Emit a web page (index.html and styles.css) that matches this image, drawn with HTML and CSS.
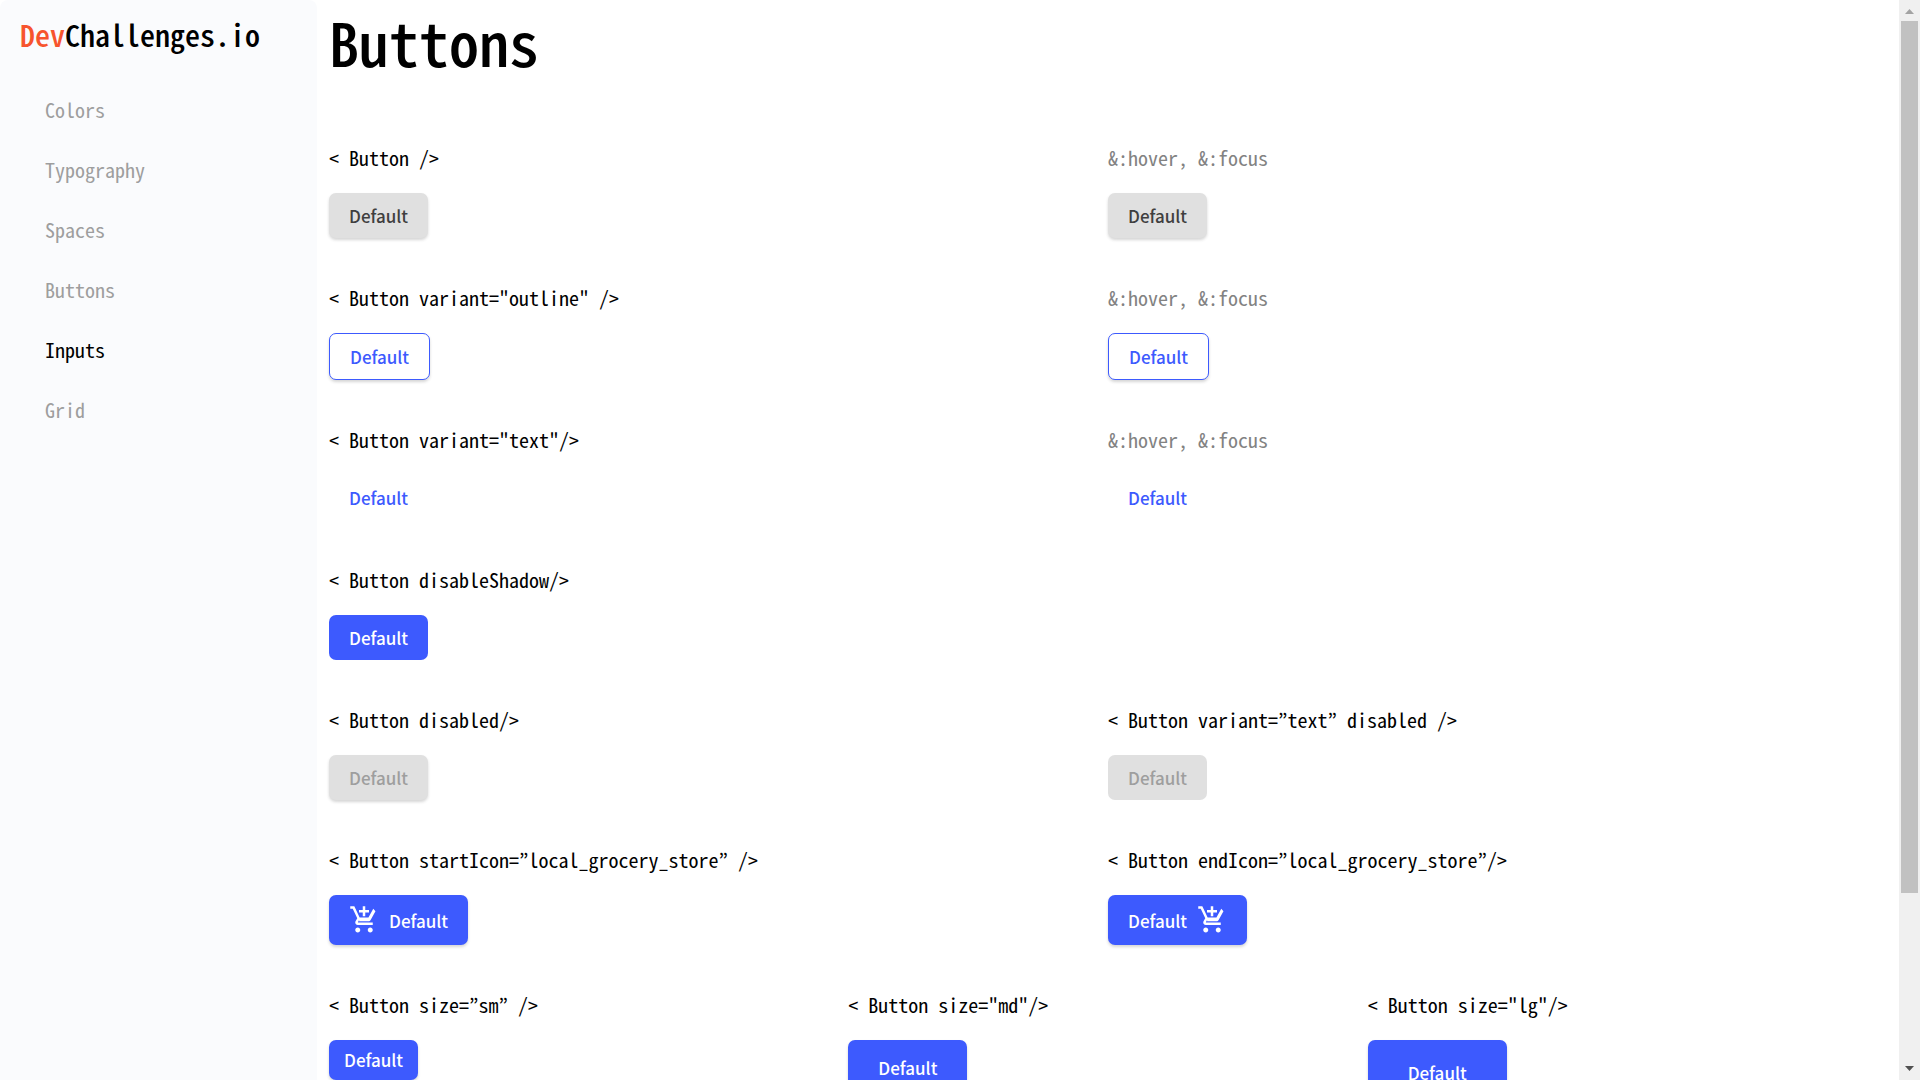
FILE: index.html
```html
<!DOCTYPE html>
<html lang="en">
<head>
<meta charset="utf-8">
<title>DevChallenges.io - Buttons</title>
<link rel="stylesheet" href="styles.css">
</head>
<body>
<svg class="sprite" aria-hidden="true">
  <symbol id="cart" viewBox="0 0 24 24">
    <path d="M11 9h2V6h3V4h-3V1h-2v3H8v2h3v3zm-4 9c-1.1 0-1.99.9-1.99 2S5.900 22 7 22s2-.9 2-2-.9-2-2-2zm10 0c-1.100 0-1.990.9-1.990 2s.89 2 1.990 2 2-.9 2-2-.9-2-2-2zm-8.900-5h7.450c.75 0 1.410-.41 1.750-1.030l3.860-7.010L19.420 3h-.01l-1.100 2-2.760 5H8.530l-.13-.27L6.160 5l-.95-2-.94-2H1v2h2l3.600 7.590-1.350 2.450c-.16.28-.25.61-.25.96 0 1.100.9 2 2 2h12v-2H7.420c-.13 0-.25-.11-.25-.25l.03-.12.900-1.630z"/>
  </symbol>
</svg>
<div class="shell">
  <aside class="sidebar">
    <a class="logo" href="#"><span class="logo-accent">Dev</span>Challenges.io</a>
    <nav class="nav">
      <a href="#colors">Colors</a>
      <a href="#typography">Typography</a>
      <a href="#spaces">Spaces</a>
      <a href="#buttons">Buttons</a>
      <a class="active" href="#inputs">Inputs</a>
      <a href="#grid">Grid</a>
    </nav>
  </aside>
  <main class="content">
    <h1 class="title">Buttons</h1>
    <section class="row">
      <div class="cell"><p class="code">&lt; Button /&gt;</p><button class="btn">Default</button></div>
      <div class="cell"><p class="code muted">&amp;:hover, &amp;:focus</p><button class="btn">Default</button></div>
    </section>
    <section class="row">
      <div class="cell"><p class="code">&lt; Button variant="outline" /&gt;</p><button class="btn outline">Default</button></div>
      <div class="cell"><p class="code muted">&amp;:hover, &amp;:focus</p><button class="btn outline">Default</button></div>
    </section>
    <section class="row">
      <div class="cell"><p class="code">&lt; Button variant="text"/&gt;</p><button class="btn text">Default</button></div>
      <div class="cell"><p class="code muted">&amp;:hover, &amp;:focus</p><button class="btn text">Default</button></div>
    </section>
    <section class="row">
      <div class="cell"><p class="code">&lt; Button disableShadow/&gt;</p><button class="btn primary flat">Default</button></div>
    </section>
    <section class="row">
      <div class="cell"><p class="code">&lt; Button disabled/&gt;</p><button class="btn" disabled>Default</button></div>
      <div class="cell"><p class="code">&lt; Button variant=”text” disabled /&gt;</p><button class="btn flat" disabled>Default</button></div>
    </section>
    <section class="row">
      <div class="cell"><p class="code">&lt; Button startIcon=”local_grocery_store” /&gt;</p><button class="btn primary icon"><svg class="cart"><use href="#cart"/></svg>Default</button></div>
      <div class="cell"><p class="code">&lt; Button endIcon=”local_grocery_store”/&gt;</p><button class="btn primary icon">Default<svg class="cart"><use href="#cart"/></svg></button></div>
    </section>
    <section class="row thirds">
      <div class="cell"><p class="code">&lt; Button size=”sm” /&gt;</p><button class="btn primary sm">Default</button></div>
      <div class="cell"><p class="code">&lt; Button size="md"/&gt;</p><button class="btn primary md">Default</button></div>
      <div class="cell"><p class="code">&lt; Button size="lg"/&gt;</p><button class="btn primary lg">Default</button></div>
    </section>
  </main>
  <div class="scrollbar" aria-hidden="true">
    <svg class="arrow" viewBox="0 0 21 21"><path fill="#a3a3a3" d="M6 14h9L10.500 9z"/></svg>
    <div class="track"><div class="thumb"></div></div>
    <svg class="arrow" viewBox="0 0 21 21"><path fill="#505050" d="M6 7h9l-4.500 5z"/></svg>
  </div>
</div>
</body>
</html>
```
FILE: styles.css
```css
* {
  box-sizing: border-box;
}

body {
  margin: 0;
  background: #fff;
  color: #000;
  font-family: "Noto Sans CJK JP", "Noto Sans Mono CJK JP", monospace;
  font-feature-settings: "hwid";
  font-size: 20px;
}

.sprite {
  display: none;
}

.shell {
  display: grid;
  grid-template-columns: 317px 1fr 21px;
  grid-template-rows: 100%;
  height: 100vh;
  overflow: hidden;
}

.sidebar {
  padding: 14px 20px;
  background: #fafbfd;
  border-radius: 8px 8px 0 0;
}

.logo {
  display: block;
  font-size: 30px;
  font-weight: 500;
  line-height: 40px;
  color: #000;
  text-decoration: none;
}

.logo-accent {
  color: #f7542e;
}

.nav {
  display: flex;
  flex-direction: column;
  gap: 36px;
  padding: 44px 25px;
}

.nav a {
  color: #9e9e9e;
  line-height: 24px;
  text-decoration: none;
}

.nav .active {
  color: #000;
}

.content {
  min-width: 0;
  padding: 0 12px;
}

.title {
  margin: 0 0 64px;
  font-size: 60px;
  font-weight: 500;
  line-height: 82px;
}

.row {
  display: grid;
  grid-template-columns: repeat(2, 1fr);
  margin-bottom: 48px;
}

.row.thirds {
  grid-template-columns: repeat(3, 1fr);
}

.cell {
  display: flex;
  flex-direction: column;
  align-items: flex-start;
  gap: 23px;
}

.code {
  margin: 0;
  line-height: 24px;
}

.muted {
  color: #828282;
}

.btn {
  display: flex;
  align-items: center;
  gap: 10px;
  padding: 10px 20px;
  border: 0;
  border-radius: 7px;
  background: #e0e0e0;
  box-shadow: 0 2px 3px rgba(51, 51, 51, 0.2);
  color: #3f3f3f;
  font-family: "Noto Sans CJK JP", sans-serif;
  font-feature-settings: normal;
  font-size: 17px;
  font-weight: 500;
  line-height: 25px;
}

.btn:disabled {
  color: #9e9e9e;
}

.outline {
  border: 1px solid #3d5afe;
  background: #fff;
  color: #3d5afe;
}

.text {
  background: none;
  box-shadow: none;
  color: #3d5afe;
}

.primary {
  background: #3d5afe;
  color: #fff;
}

.flat {
  box-shadow: none;
}

.sm {
  padding: 8px 15px;
  line-height: 24px;
}

.md {
  padding: 15px 30px;
}

.lg {
  padding: 20px 40px;
}

.cart {
  width: 30px;
  height: 30px;
  fill: currentColor;
}

.scrollbar {
  display: flex;
  flex-direction: column;
  background: #f0f0f0;
}

.arrow {
  width: 21px;
  height: 21px;
}

.track {
  flex: 1;
  padding: 0 2px;
}

.thumb {
  height: 84%;
  background: #c1c1c1;
}
```
